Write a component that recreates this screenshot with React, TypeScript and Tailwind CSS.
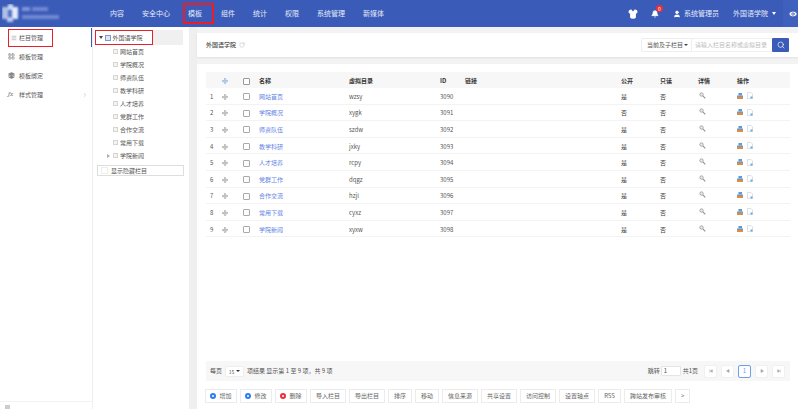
import { Bell, ChevronRight, Layers, Menu, Move, RotateCw, Search, Shirt, User, Eye, SkipBack, SkipForward, Play, LayoutGrid } from "lucide-react";

const navItems = ["内容", "安全中心", "模板", "组件", "统计", "权限", "系统管理", "新媒体"];
const treeItems = ["网站首页", "学院概况", "师资队伍", "教学科研", "人才培养", "党群工作", "合作交流", "常用下载", "学院新闻"];
const rows = [
  { name: "网站首页", dir: "wzsy", id: 3090, open: "是" },
  { name: "学院概况", dir: "xygk", id: 3091, open: "否" },
  { name: "师资队伍", dir: "szdw", id: 3092, open: "是" },
  { name: "教学科研", dir: "jxky", id: 3093, open: "是" },
  { name: "人才培养", dir: "rcpy", id: 3094, open: "是" },
  { name: "党群工作", dir: "dqgz", id: 3095, open: "是" },
  { name: "合作交流", dir: "hzjl", id: 3096, open: "是" },
  { name: "常用下载", dir: "cyxz", id: 3097, open: "是" },
  { name: "学院新闻", dir: "xyxw", id: 3098, open: "是" },
];
const plainButtons = ["导入栏目", "导出栏目", "排序", "移动", "信息来源", "共享设置", "访问控制", "设置轴点", "RSS", "跨站发布审核", ">"];
const gridCols = "grid grid-cols-[12px_13px_28px_90px_91px_25px_156px_39px_38px_39px_53px] items-center";

function Logo() {
  return (
    <svg width="60" height="20" viewBox="0 0 60 20" className="ml-[2px] shrink-0">
      <g style={{ filter: "blur(0.8px)" }}>
        <rect x="0" y="3" width="6" height="12" fill="#aebfe8" />
        <rect x="6" y="0" width="5" height="6" fill="#c9d6f2" />
        <rect x="10" y="3" width="6" height="12" fill="#e3eafa" />
        <rect x="5" y="13" width="6" height="5" fill="#b9c8ec" />
        <rect x="6" y="7" width="4" height="5" fill="#5573c6" />
        <rect x="20" y="3" width="8" height="4" fill="#7f97d8" />
        <rect x="30" y="3" width="16" height="4" fill="#7189d2" />
        <rect x="20" y="11" width="37" height="4" fill="#7189d2" />
      </g>
    </svg>
  );
}

function TreeIcon({ className }: { className: string }) {
  return <span className={`inline-block h-[5px] w-[5px] shrink-0 border ${className}`} />;
}

function MagnifierIcon() {
  return (
    <svg width="7" height="7" viewBox="0 0 7 7" className="-mt-[3px] ml-[1px]">
      <circle cx="2.5" cy="2.5" r="1.7" fill="#e8e8e8" stroke="#9a9a9a" strokeWidth="0.8" />
      <path d="M3.8 3.8 6.3 6.3" stroke="#8d8d8d" strokeWidth="1.1" />
    </svg>
  );
}

function OpIcons() {
  return (
    <span className="-mt-[2px] flex items-center gap-[4px]">
      <svg width="6" height="6" viewBox="0 0 6 6">
        <rect x="1.5" y="0" width="3.5" height="2.5" fill="#5b9bd5" />
        <rect x="0" y="2.5" width="6" height="1.5" fill="#7c97b8" />
        <rect x="0" y="4" width="6" height="2" fill="#e08c3c" />
      </svg>
      <svg width="6" height="7" viewBox="0 0 6 7">
        <path d="M.5.5H4L5.5 2V6.5H.5Z" fill="#fff" stroke="#c5ccd6" strokeWidth="0.6" />
        <rect x="3.5" y="4.5" width="2" height="2" fill="#5aaee8" />
      </svg>
    </span>
  );
}

function PageButton({ children, active }: { children: React.ReactNode; active?: boolean }) {
  return (
    <span
      className={`flex h-[13px] w-[13px] items-center justify-center rounded-[2px] border bg-white ${
        active ? "border-[#6d9eea] text-[#6d9eea]" : "border-[#f0f0f0] text-[#a8a8a8]"
      }`}
    >
      {children}
    </span>
  );
}

function IconButton({ label, color }: { label: string; color: string }) {
  return (
    <button className="flex h-[14px] w-[32px] items-center justify-center gap-[3px] border border-[#ececec] bg-white text-[#666]">
      <span className={`h-[6px] w-[6px] rounded-full border-[2px] bg-white ${color}`} />
      {label}
    </button>
  );
}

export default function App() {
  return (
    <div className="flex h-[409px] w-[798px] flex-col overflow-hidden bg-white text-[6px] leading-none text-[#555] [font-family:'Noto_Sans_CJK_SC','Liberation_Sans',sans-serif]">
      <header className="flex h-[27px] shrink-0 items-center bg-[#3a5bb8] text-[7px] text-[#e6ebf8]">
        <div className="w-[101px] shrink-0">
          <Logo />
        </div>
        <nav className="flex h-full items-center">
          {navItems.map((item) =>
            item === "模板" ? (
              <div
                key={item}
                className="-mr-[2px] ml-[4px] flex h-[21px] w-[31px] shrink-0 items-center border-2 border-[#ee1c25] pl-[3px]"
              >
                {item}
              </div>
            ) : (
              <span key={item} className="px-[9px]">
                {item}
              </span>
            ),
          )}
        </nav>
        <div className="ml-auto flex h-full items-center">
          <Shirt className="mr-[13px] h-[10px] w-[10px] fill-white text-white" />
          <span className="relative mr-[14px]">
            <Bell className="h-[8px] w-[8px] fill-white text-white" />
            <span className="absolute -right-[4px] -top-[5px] flex h-[7px] w-[7px] items-center justify-center rounded-full bg-[#e8303a] text-[5px] text-white">
              0
            </span>
          </span>
          <User className="mr-[3px] h-[8px] w-[8px] fill-white text-white" />
          <span>系统管理员</span>
          <span className="ml-[14px]">外国语学院</span>
          <span className="ml-[4px] mr-[7px] border-x-[2.5px] border-t-[3px] border-x-transparent border-t-white" />
          <div className="flex h-full w-[15px] items-center bg-[#4060bd] pl-[5px]">
            <Eye className="h-[10px] w-[10px] shrink-0 fill-white text-[#3a5bb8]" />
          </div>
        </div>
      </header>

      <div className="flex min-h-0 flex-1">
        <aside className="flex w-[93px] shrink-0 flex-col border-r border-[#efefef] pt-[1px]">
          <div className="flex h-[19px] items-center border-r-[1.5px] border-[#3a5bb8] pl-[8px]">
            <div className="flex h-[18px] w-[45px] items-center gap-[2.5px] border-[1.5px] border-[#e8202a] pl-[1.5px]">
              <Menu className="h-[6px] w-[6px] text-[#888]" />
              <span>栏目管理</span>
            </div>
          </div>
          <div className="flex h-[19px] items-center gap-[4px] pl-[8px]">
            <LayoutGrid className="h-[7px] w-[7px] text-[#777]" />
            模板管理
          </div>
          <div className="flex h-[19px] items-center gap-[4px] pl-[8px]">
            <Layers className="h-[7px] w-[7px] fill-[#888] text-[#777]" />
            模板绑定
          </div>
          <div className="flex h-[19px] items-center pl-[8px]">
            <span className="w-[11px] font-serif text-[7px] italic text-[#777]">fx</span>
            样式管理
            <ChevronRight className="ml-auto mr-[4px] h-[6px] w-[6px] text-[#aaa]" />
          </div>
          <div className="mt-auto h-[8px] border-t border-[#f2f2f2] pl-[5px] pt-[3px]">
            <span className="block h-[5px] w-[5px] bg-[#ccc]" />
          </div>
        </aside>

        <section className="flex w-[96px] shrink-0 flex-col pl-[2px] pt-[3px]">
          <div className="flex h-[15px] w-[88px] items-stretch bg-[#f0f0f0]">
            <div className="flex w-[58px] items-center border-[1.5px] border-[#e8202a] bg-white pl-[3px]">
              <span className="mr-[2px] border-x-[2px] border-t-[3px] border-x-transparent border-t-[#444]" />
              <span className="mr-[1.5px] flex h-[6px] w-[6px] items-center justify-center border border-[#7d9ccc] bg-[#dbe6f6]" />
              外国语学院
            </div>
          </div>
          {treeItems.map((item, i) => (
            <div key={item} className="relative flex h-[13px] items-center gap-[2px] pl-[18px]">
              {i === 8 && <span className="absolute left-[12px] border-y-[2px] border-l-[3px] border-y-transparent border-l-[#aaa]" />}
              <TreeIcon className="border-[#d5d5d5] bg-[#f3f3f3]" />
              {item}
            </div>
          ))}
          <div className="ml-[2px] mt-[3px] flex h-[11px] w-[87px] items-center gap-[3px] border border-[#dedede] pl-[3px]">
            <span className="h-[7px] w-[7px] border border-[#eee] bg-white" />
            显示隐藏栏目
          </div>
        </section>

        <main className="flex min-w-0 flex-1 flex-col border-l-[8px] border-[#efefef] bg-[#f3f3f3] pt-[6px]">
          <div className="flex h-[24px] shrink-0 items-center bg-white pl-[9px] pr-[9px] shadow-[0_1px_2px_rgba(0,0,0,0.08)]">
            <span className="font-medium text-[#444]">外国语学院</span>
            <RotateCw className="ml-[3px] h-[6px] w-[6px] text-[#bbb]" />
            <div className="ml-auto flex h-[14px] items-stretch">
              <div className="flex w-[51px] items-center justify-between rounded-l-[2px] border border-[#eee] pl-[5px] pr-[3px]">
                当前及子栏目
                <span className="border-x-[2px] border-t-[2.5px] border-x-transparent border-t-[#444]" />
              </div>
              <div className="flex w-[80px] items-center border-y border-[#f0f0f0] pl-[3px] text-[#bdbdbd]">
                请输入栏目名称或虚拟目录
              </div>
              <button className="flex w-[17px] items-center justify-center rounded-[1px] bg-[#3a5bb8]">
                <Search className="h-[8px] w-[8px] text-white" />
              </button>
            </div>
          </div>

          <div className="mt-[7px] flex min-h-0 flex-1 flex-col bg-white pb-[6px] pl-[9px] pr-[8px] pt-[8px]">
            <div className={`${gridCols} h-[16px] shrink-0 bg-[#f7f7f7] pt-[2px] font-bold text-[#333]`}>
              <span />
              <Move className="justify-self-center h-[6px] w-[6px] text-[#7fa8d8]" strokeWidth={3} />
              <span className="ml-[12px] h-[7px] w-[7px] rounded-[1px] border border-[#999] bg-white" />
              <span>名称</span>
              <span>虚拟目录</span>
              <span>ID</span>
              <span>链接</span>
              <span>公开</span>
              <span>只读</span>
              <span>详情</span>
              <span>操作</span>
            </div>
            {rows.map((row, i) => (
              <div key={row.id} className={`${gridCols} h-[16.6px] shrink-0 border-b border-[#f3f3f3] pt-[2px]`}>
                <span className="pl-[4px]">{i + 1}</span>
                <Move className="justify-self-center h-[6px] w-[6px] text-[#999]" strokeWidth={3} />
                <span className="ml-[12px] h-[7px] w-[7px] rounded-[1px] border border-[#aaa] bg-white" />
                <a className="text-[#5f84e6]">{row.name}</a>
                <span>{row.dir}</span>
                <span>{row.id}</span>
                <span />
                <span className="text-[#444]">{row.open}</span>
                <span className="text-[#444]">否</span>
                <MagnifierIcon />
                <OpIcons />
              </div>
            ))}
            <div className="flex-1" />
            <div className="flex h-[20px] shrink-0 items-center bg-[#f7f7f7] pl-[4px] pr-[5px]">
              <span>每页</span>
              <span className="ml-[3px] flex h-[11px] w-[19px] items-center justify-center gap-[2px] rounded-[1px] border border-[#eee] bg-white text-[5px]">
                15
                <span className="border-x-[2px] border-t-[2.5px] border-x-transparent border-t-[#333]" />
              </span>
              <span className="ml-[3px]">项结果 显示第 1 至 9 项，共 9 项</span>
              <span className="ml-auto">跳转</span>
              <span className="ml-[1px] flex h-[10px] w-[20px] items-center rounded-[1px] border border-[#e5e5e5] bg-white pl-[2px]">1</span>
              <span className="ml-[2px]">共1页</span>
              <div className="ml-[6px] flex items-center gap-[4px]">
                <PageButton><SkipBack className="h-[4px] w-[4px] fill-current" /></PageButton>
                <PageButton><Play className="h-[4px] w-[4px] rotate-180 fill-current" /></PageButton>
                <PageButton active>1</PageButton>
                <PageButton><Play className="h-[4px] w-[4px] fill-current" /></PageButton>
                <PageButton><SkipForward className="h-[4px] w-[4px] fill-current" /></PageButton>
              </div>
            </div>
            <div className="-ml-[1px] mt-[8px] flex shrink-0 gap-[3px]">
              <IconButton label="增加" color="border-[#2f7cf0]" />
              <IconButton label="修改" color="border-[#2f7cf0]" />
              <IconButton label="删除" color="border-[#ee2f3a]" />
              {plainButtons.map((label) => (
                <button key={label} className="flex h-[14px] items-center border border-[#ececec] bg-white px-[5px] text-[#666]">
                  {label}
                </button>
              ))}
            </div>
          </div>
        </main>
      </div>
    </div>
  );
}
